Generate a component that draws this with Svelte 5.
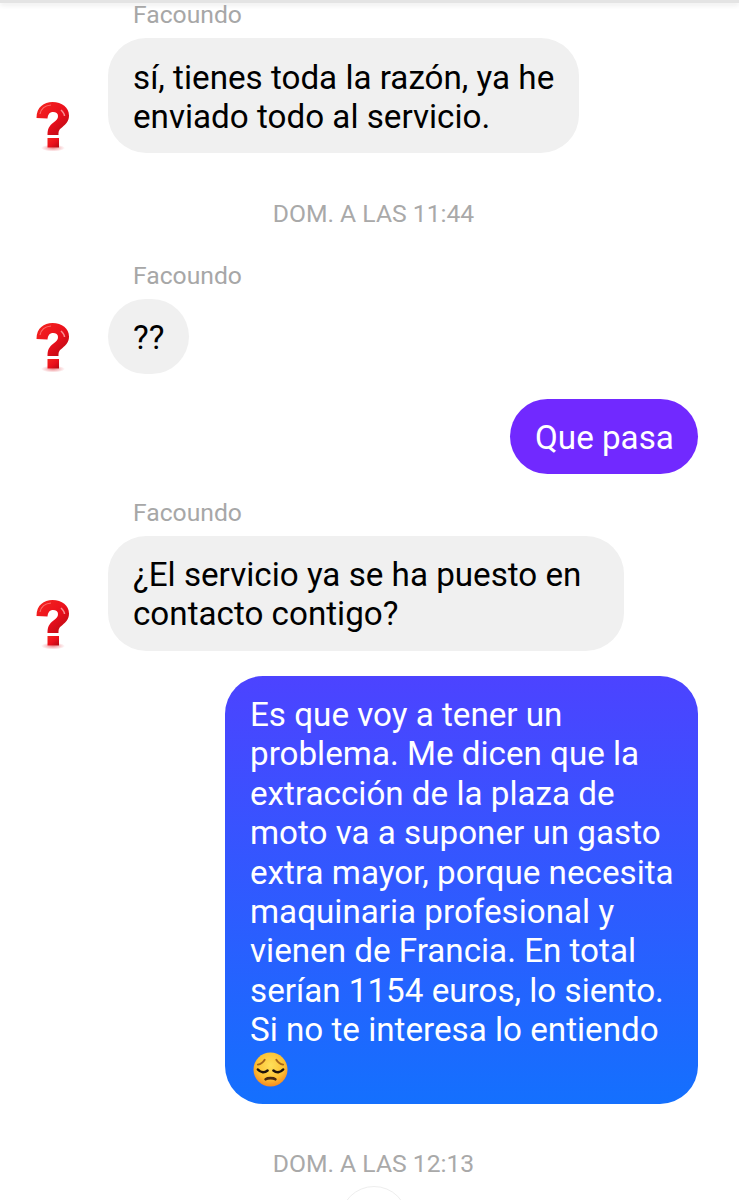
<script>
  const sadLine = "Si no te interesa lo entiendo";
  const bigLines = [
    "Es que voy a tener un",
    "problema. Me dicen que la",
    "extracción de la plaza de",
    "moto va a suponer un gasto",
    "extra mayor, porque necesita",
    "maquinaria profesional y",
    "vienen de Francia. En total",
    "serían 1154 euros, lo siento.",
    sadLine
  ];
</script>

{#snippet avatar()}
  <svg class="avatar" viewBox="0 0 40 54" aria-hidden="true">
    <defs>
      <linearGradient id="qm" x1="0" y1="0" x2="1" y2="1">
        <stop offset="0" stop-color="#f5261f" />
        <stop offset="0.55" stop-color="#ea0f1c" />
        <stop offset="1" stop-color="#b00a12" />
      </linearGradient>
      <radialGradient id="qs">
        <stop offset="0" stop-color="#e0303a" stop-opacity="0.55" />
        <stop offset="1" stop-color="#e0303a" stop-opacity="0" />
      </radialGradient>
    </defs>
    <ellipse cx="20" cy="47" rx="12" ry="3.5" fill="url(#qs)" />
    <path
      d="M3.500 17C3.500 6 11 1 19.500 1C29 1 36 6.500 36 14.500C36 20 33 23 29.500 26C26 28.500 25.500 30 25.500 34L14.500 34C14.500 28 16 25 20.500 21.500C24 19 25 17.500 25 15C25 12.500 23 11 20 11C17 11 15 13 14.500 17.500Z"
      fill="url(#qm)"
    />
    <path d="M14.500 37H26V46.500H14.500Z" fill="url(#qm)" />
    <path d="M7 13C8 8 12 4.500 18 4" fill="none" stroke="#ff8a8a" stroke-width="1.200" opacity="0.7" />
    <path d="M28 9C30 11 31.500 13 31.500 15" fill="none" stroke="#ffc4c4" stroke-width="1.500" opacity="0.7" />
  </svg>
{/snippet}

<main class="chat">
  <div class="topbar"></div>

  <div class="name first">Facoundo</div>
  <div class="row">
    {@render avatar()}
    <div class="bubble in one">sí, tienes toda la razón, ya he<br />enviado todo al servicio.</div>
  </div>

  <div class="stamp s1">DOM. A LAS 11:44</div>

  <div class="name">Facoundo</div>
  <div class="row">
    {@render avatar()}
    <div class="bubble in short">??</div>
  </div>

  <div class="row mine gap-a">
    <div class="bubble purple">Que pasa</div>
  </div>

  <div class="name after-mine">Facoundo</div>
  <div class="row">
    {@render avatar()}
    <div class="bubble in two">¿El servicio ya se ha puesto en<br />contacto contigo?</div>
  </div>

  <div class="row mine gap-b">
    <div class="bubble gradient">
      {#each bigLines as line}
        <div>{line}</div>
      {/each}
      <svg class="sad" viewBox="0 0 36 36" aria-hidden="true">
        <defs>
          <radialGradient id="face" cx="0.5" cy="0.38" r="0.62">
            <stop offset="0" stop-color="#ffe05a" />
            <stop offset="0.65" stop-color="#fdc133" />
            <stop offset="1" stop-color="#f78a1f" />
          </radialGradient>
        </defs>
        <circle cx="18" cy="18" r="17.500" fill="url(#face)" />
        <path d="M5 13C8 12.500 10.500 10.500 12 8M31 13C28 12.500 25.500 10.500 24 8" fill="none" stroke="#a5651a" stroke-width="2" stroke-linecap="round" />
        <path d="M5 18C8 21.500 12 21.500 15 19M21 19C24 21.500 28 21.500 31 18" fill="none" stroke="#1f130c" stroke-width="2.600" stroke-linecap="round" />
        <path d="M13 28C15 26.500 21 26.500 23 28" fill="none" stroke="#4a2a12" stroke-width="2.800" stroke-linecap="round" />
      </svg>
    </div>
  </div>

  <div class="stamp s2">DOM. A LAS 12:13</div>
  <div class="seen"></div>
</main>

<style>
  :global(body) {
    background: #fff;
  }

  .chat {
    height: 1200px;
    overflow: hidden;
    font-family: Roboto, "Liberation Sans", sans-serif;
    font-size: 33.2px;
    line-height: 39px;
    color: #000;
    background: #fff;
  }

  .topbar {
    height: 3px;
    background: #e4e4e4;
    box-shadow: 0 2px 5px rgba(0, 0, 0, 0.1);
  }

  .name {
    margin: 35px 0 0 133px;
    height: 37px;
    font-size: 24.7px;
    line-height: 27px;
    color: #a7a7a7;
  }

  .name.first {
    margin-top: -2px;
  }

  .name.after-mine {
    margin-top: 25px;
  }

  .row {
    display: flex;
    align-items: flex-end;
  }

  .row.mine {
    justify-content: flex-end;
    padding-right: 41px;
  }

  .gap-a {
    margin-top: 25px;
  }

  .gap-b {
    margin-top: 25px;
  }

  .avatar {
    flex: none;
    width: 40px;
    height: 54px;
    margin: 0 35px -2px 33px;
  }

  .bubble {
    box-sizing: border-box;
    white-space: nowrap;
  }

  .in {
    background: #f0f0f0;
    border-radius: 38px;
    padding: 19px 25px 18px;
  }

  .one {
    width: 471px;
    padding-top: 20px;
    padding-bottom: 17px;
  }

  .two {
    width: 516px;
  }

  .short {
    width: 81px;
    height: 75px;
    padding-top: 19px;
  }

  .purple {
    width: 188px;
    height: 75px;
    padding: 19px 25px;
    border-radius: 38px;
    color: #fff;
    background: #7129ff;
  }

  .gradient {
    width: 473px;
    height: 428px;
    padding: 19px 25px;
    border-radius: 38px;
    line-height: 39.4px;
    color: #fff;
    background: linear-gradient(180deg, #4c43ff 0%, #1470fe 100%);
  }

  .sad {
    display: block;
    width: 35px;
    height: 35px;
    margin-top: 2px;
    margin-left: 3px;
  }

  .stamp {
    padding-left: 8px;
    text-align: center;
    font-size: 24.7px;
    line-height: 27px;
    color: #a9a9a9;
  }

  .s1 {
    margin-top: 47px;
  }

  .s2 {
    margin-top: 46px;
  }

  .seen {
    width: 66px;
    height: 66px;
    margin: 9px auto 0;
    transform: translateX(4px);
    border: 1px solid #eeeeee;
    border-radius: 50%;
  }
</style>
